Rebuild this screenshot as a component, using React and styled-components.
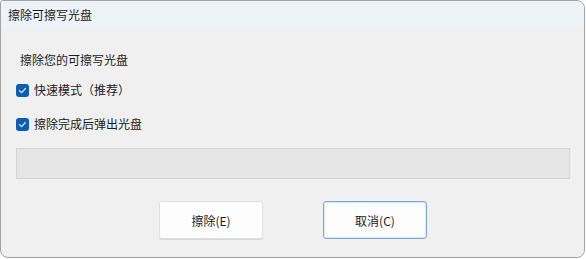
import React from "react";
import styled, { createGlobalStyle } from "styled-components";

const GlobalStyle = createGlobalStyle`
  html, body {
    margin: 0;
    padding: 0;
    background: #ffffff;
  }
  body {
    font-family: "Noto Sans CJK SC", "Noto Sans", sans-serif;
    font-size: 12px;
    color: #1b1b1b;
  }
`;

const Window = styled.div`
  width: 585px;
  height: 258px;
  box-sizing: border-box;
  border: 1px solid #a3a3a3;
  border-radius: 3px 8px 8px 8px;
  overflow: hidden;
  background: #f0f0f0;
  display: flex;
  flex-direction: column;
`;

const TitleBar = styled.div`
  height: 28px;
  flex: none;
  display: flex;
  align-items: center;
  padding-left: 7px;
  background: #eef2f9;
  font-size: 12px;
  line-height: 16px;
`;

const Body = styled.div`
  flex: 1;
  display: flex;
  flex-direction: column;
  padding: 23px 14px 0 15px;
`;

const Label = styled.div`
  line-height: 16px;
  padding-left: 4px;
  margin-bottom: 14px;
`;

const CheckRow = styled.label`
  display: flex;
  align-items: center;
  gap: 5px;
  line-height: 16px;
  margin-bottom: ${(p) => p.$gap}px;
`;

const Box = styled.span`
  width: 13px;
  height: 13px;
  border-radius: 3px;
  background: #0a5fb4;
  display: flex;
  align-items: center;
  justify-content: center;
  flex: none;
`;

const Progress = styled.div`
  height: 31px;
  box-sizing: border-box;
  border: 1px solid #d4d4d4;
  background: #e6e6e6;
  margin-bottom: 22px;
`;

const Buttons = styled.div`
  display: flex;
  justify-content: center;
  gap: 60px;
`;

const Button = styled.button`
  width: 104px;
  height: 38px;
  box-sizing: border-box;
  background: #fdfdfd;
  border: 1px solid ${(p) => (p.$focused ? "#7aa9dc" : "#e0e0e0")};
  box-shadow: ${(p) => (p.$focused ? "inset 0 0 0 1px #d9e7f6" : "0 1px 0 #d6d6d6")};
  border-radius: 3px;
  font-family: "Noto Sans CJK SC", "Noto Sans", sans-serif;
  font-size: 12px;
  color: #1b1b1b;
  padding: 0;
`;

const Check = () => (
  <Box>
    <svg width="9" height="9" viewBox="0 0 10 10">
      <path d="M1.6 5.2 L4 7.4 L8.4 2.6" fill="none" stroke="#ffffff" strokeWidth="1.2" strokeLinecap="round" strokeLinejoin="round" />
    </svg>
  </Box>
);

export default function App() {
  return (
    <>
      <GlobalStyle />
      <Window>
        <TitleBar>擦除可擦写光盘</TitleBar>
        <Body>
          <Label>擦除您的可擦写光盘</Label>
          <CheckRow $gap={18}>
            <Check />
            快速模式（推荐）
          </CheckRow>
          <CheckRow $gap={16}>
            <Check />
            擦除完成后弹出光盘
          </CheckRow>
          <Progress />
          <Buttons>
            <Button>擦除(E)</Button>
            <Button $focused>取消(C)</Button>
          </Buttons>
        </Body>
      </Window>
    </>
  );
}
